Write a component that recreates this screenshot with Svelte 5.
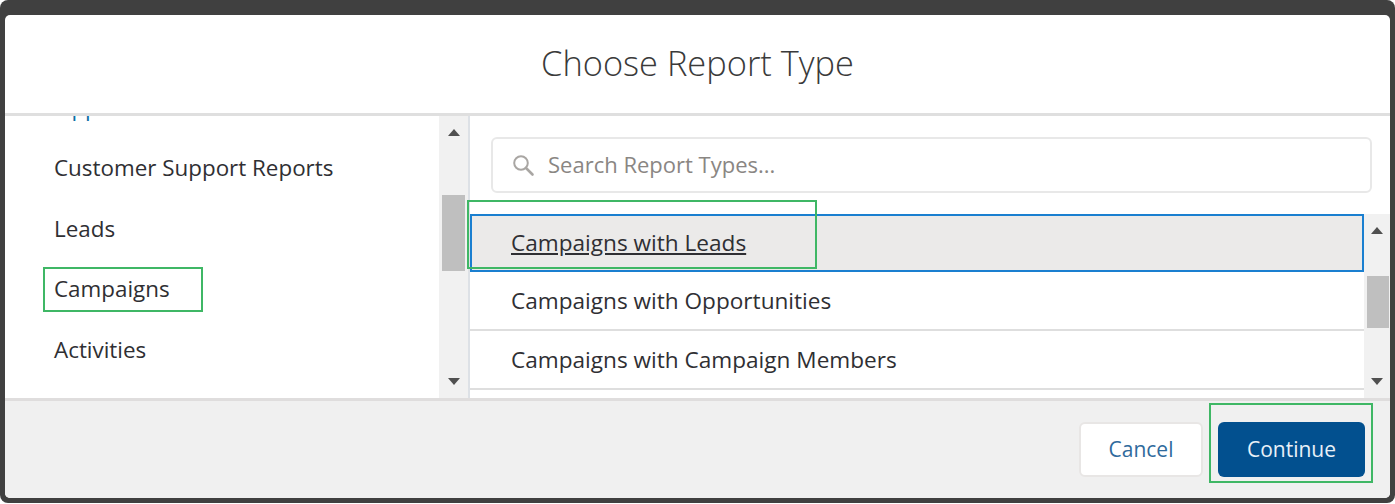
<script>
	const categories = ['Opportunities', 'Customer Support Reports', 'Leads', 'Campaigns', 'Activities'];
	const reportTypes = ['Campaigns with Leads', 'Campaigns with Opportunities', 'Campaigns with Campaign Members'];
</script>

<div class="frame">
	<div class="modal">
		<header class="title">Choose Report Type</header>

		<div class="content">
			<div class="categories">
				<ul class="category-list">
					{#each categories as category}
						<li class:first={category === 'Opportunities'} class:marked={category === 'Campaigns'}>{category}</li>
					{/each}
				</ul>
				<div class="scrollbar left-bar">
					<span class="arrow up"></span>
					<span class="thumb"></span>
					<span class="arrow down"></span>
				</div>
			</div>

			<div class="reports">
				<div class="search">
					<svg width="24" height="24" viewBox="0 0 24 24" fill="none" stroke="#a9a6a3" aria-hidden="true">
						<circle cx="10" cy="10" r="6.8" stroke-width="2" />
						<path d="M15 15l6.5 6.5" stroke-width="2.6" stroke-linecap="round" />
					</svg>
					<span class="placeholder">Search Report Types...</span>
				</div>

				<div class="results">
					<ul class="report-list">
						{#each reportTypes as report, i}
							<li class:active={i === 0}>
								{#if i === 0}<u>{report}</u>{:else}{report}{/if}
							</li>
						{/each}
					</ul>
					<div class="scrollbar right-bar">
						<span class="arrow up"></span>
						<span class="thumb"></span>
						<span class="arrow down"></span>
					</div>
					<span class="mark-report"></span>
				</div>
			</div>
		</div>

		<footer class="footer">
			<button class="btn cancel">Cancel</button>
			<div class="continue-wrap">
				<button class="btn continue">Continue</button>
			</div>
		</footer>
	</div>
</div>

<style>
	:global(body) {
		margin: 0;
		background: #fff;
	}

	.frame {
		box-sizing: border-box;
		height: 503px;
		padding: 15px 5px 5px;
		background: #404040;
		border-radius: 8px;
	}

	.modal {
		box-sizing: border-box;
		height: 483px;
		background: #fff;
		border-radius: 5px;
		overflow: hidden;
		display: flex;
		flex-direction: column;
		font-family: 'Open Sans', sans-serif;
		font-size: 22.4px;
		color: #2f2f33;
	}

	.title {
		box-sizing: border-box;
		height: 101px;
		flex: none;
		padding-bottom: 3px;
		border-bottom: 3px solid #dfdfdf;
		display: flex;
		align-items: center;
		justify-content: center;
		font-weight: 300;
		font-size: 34.4px;
		color: #3a3a3a;
	}

	.content {
		flex: 1;
		min-height: 0;
		display: flex;
	}

	.categories {
		width: 463px;
		flex: none;
		display: flex;
		overflow: hidden;
		border-right: 2px solid #dde1e6;
	}

	.category-list {
		flex: 1;
		list-style: none;
		margin: -39px 0 0;
		padding: 0;
	}

	.category-list li {
		height: 60.5px;
		display: flex;
		align-items: center;
		padding-left: 49px;
		position: relative;
	}

	.category-list li.first {
		color: #0b6fa4;
	}

	.category-list li.marked::after {
		content: '';
		position: absolute;
		left: 38px;
		top: 8px;
		width: 156px;
		height: 41px;
		border: 2px solid #3fb765;
	}

	.scrollbar {
		position: relative;
		flex: none;
		background: #f1f1f1;
	}

	.left-bar {
		width: 29px;
	}

	.right-bar {
		width: 26px;
	}

	.arrow {
		position: absolute;
		left: 50%;
		margin-left: -6px;
		width: 0;
		height: 0;
		border-left: 6px solid transparent;
		border-right: 6px solid transparent;
	}

	.arrow.up {
		top: 13px;
		border-bottom: 7px solid #505050;
	}

	.arrow.down {
		bottom: 13px;
		border-top: 7px solid #505050;
	}

	.thumb {
		position: absolute;
		background: #bfbfbf;
	}

	.left-bar .thumb {
		left: 3px;
		width: 23px;
		top: 79px;
		height: 76px;
	}

	.right-bar .thumb {
		left: 3px;
		width: 22px;
		top: 62px;
		height: 52px;
	}

	.reports {
		flex: 1;
		min-width: 0;
		display: flex;
		flex-direction: column;
	}

	.search {
		box-sizing: border-box;
		height: 56px;
		margin: 21px 18px 21px 21px;
		padding-left: 18px;
		flex: none;
		display: flex;
		align-items: center;
		gap: 13px;
		border: 2px solid #e8e8e8;
		border-radius: 6px;
		color: #8a8683;
		font-size: 22px;
	}

	.placeholder {
		margin-top: -2px;
	}

	.results {
		position: relative;
		flex: 1;
		min-height: 0;
		display: flex;
	}

	.report-list {
		flex: 1;
		list-style: none;
		margin: 0;
		padding: 0;
		overflow: hidden;
		font-size: 22.6px;
	}

	.report-list li {
		box-sizing: border-box;
		height: 59px;
		padding-left: 41px;
		display: flex;
		align-items: center;
		border-bottom: 2px solid #dedede;
	}

	.report-list li.active {
		height: 58px;
		padding-left: 39px;
		padding-bottom: 2px;
		background: #ebeae9;
		border: 2px solid #1a7fd0;
	}

	.mark-report {
		position: absolute;
		left: -3px;
		top: -14px;
		width: 346px;
		height: 65px;
		border: 2px solid #3fb765;
		pointer-events: none;
	}

	.footer {
		box-sizing: border-box;
		height: 100px;
		flex: none;
		border-top: 3px solid #dfdddd;
		background: #f0f0f0;
		display: flex;
		align-items: center;
		justify-content: flex-end;
		gap: 15px;
		padding-right: 25px;
	}

	.btn {
		box-sizing: border-box;
		height: 55px;
		border-radius: 6px;
		font: inherit;
		font-size: 21px;
		padding: 0 0 2px;
	}

	.cancel {
		width: 124px;
		background: #fff;
		border: 2px solid #e8e6e5;
		color: #2f6a9c;
	}

	.continue-wrap {
		position: relative;
	}

	.continue-wrap::after {
		content: '';
		position: absolute;
		left: -9px;
		right: -8px;
		top: -19px;
		bottom: -6px;
		border: 2px solid #3fb765;
	}

	.continue {
		display: block;
		width: 147px;
		background: #02508f;
		border: 0;
		color: #e9f1f8;
	}
</style>
